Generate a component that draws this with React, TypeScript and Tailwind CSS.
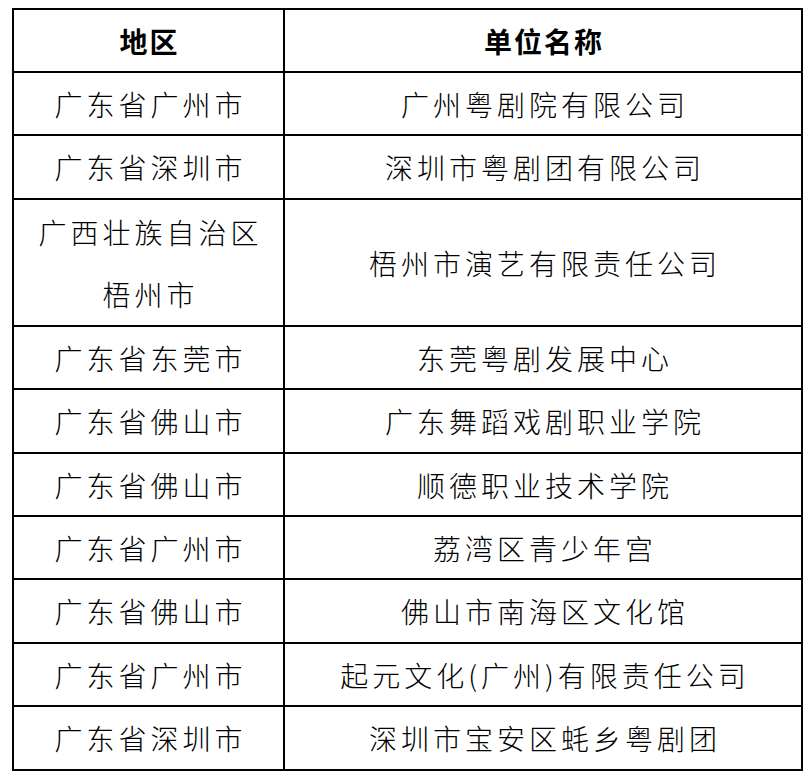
const rows: { region: React.ReactNode; unit: string; h: string }[] = [
  { region: '广东省广州市', unit: '广州粤剧院有限公司', h: 'h-[63px]' },
  { region: '广东省深圳市', unit: '深圳市粤剧团有限公司', h: 'h-[64px]' },
  {
    region: (
      <>
        <div className="leading-[62px]">广西壮族自治区</div>
        <div className="leading-[62px]">梧州市</div>
      </>
    ),
    unit: '梧州市演艺有限责任公司',
    h: 'h-[127px]',
  },
  { region: '广东省东莞市', unit: '东莞粤剧发展中心', h: 'h-[63px]' },
  { region: '广东省佛山市', unit: '广东舞蹈戏剧职业学院', h: 'h-[64px]' },
  { region: '广东省佛山市', unit: '顺德职业技术学院', h: 'h-[63px]' },
  { region: '广东省广州市', unit: '荔湾区青少年宫', h: 'h-[63px]' },
  { region: '广东省佛山市', unit: '佛山市南海区文化馆', h: 'h-[64px]' },
  { region: '广东省广州市', unit: '起元文化(广州)有限责任公司', h: 'h-[63px]' },
  { region: '广东省深圳市', unit: '深圳市宝安区蚝乡粤剧团', h: 'h-[64px]' },
]

export default function App() {
  return (
    <div
      className="w-[812px] h-[780px] bg-white pt-[8px] pl-[12px] text-black"
      style={{ fontFamily: '"Noto Sans CJK SC", "Noto Sans", sans-serif' }}
    >
      <table className="w-[791px] border-collapse border-2 border-black text-[28px]">
        <thead>
          <tr>
            <th className="h-[63px] w-[271px] border-2 border-black p-0 pl-[2px] text-center font-bold tracking-[2px]">地区</th>
            <th className="h-[63px] border-2 border-black p-0 pl-[2px] text-center font-bold tracking-[2px]">单位名称</th>
          </tr>
        </thead>
        <tbody className="tracking-[4px]">
          {rows.map((r, i) => (
            <tr key={i}>
              <td className={`${r.h} border-2 border-black p-0 pl-[4px] text-center align-middle font-light`}>
                {r.region}
              </td>
              <td className={`${r.h} border-2 border-black p-0 pl-[4px] text-center align-middle font-light`}>
                {r.unit}
              </td>
            </tr>
          ))}
        </tbody>
      </table>
    </div>
  )
}
